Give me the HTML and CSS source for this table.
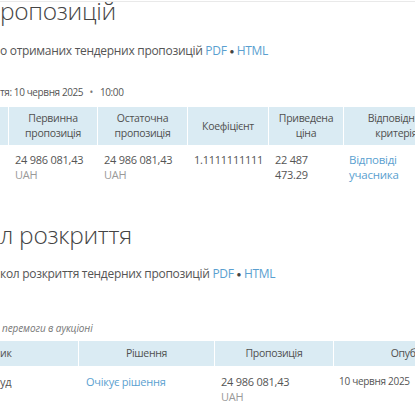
FILE: index.html
```html
<!DOCTYPE html>
<html lang="uk">
<head>
<meta charset="utf-8">
<link rel="stylesheet" href="styles.css">
</head>
<body>
<div class="page">
  <div class="topline"></div>
  <h2 class="title t1">ропозицій</h2>
  <p class="doc">о отриманих тендерних пропозицій <a class="link">PDF</a> <span class="dot">●</span> <a class="link">HTML</a></p>
  <p class="meta">тя: 10 червня 2025 <span class="bullet">•</span> 10:00</p>

  <table class="grid g1">
    <colgroup>
      <col class="c8"><col class="c89"><col class="c90"><col class="c81"><col class="c75"><col class="c113">
    </colgroup>
    <thead>
      <tr>
        <th></th>
        <th>Первинна<br>пропозиція</th>
        <th>Остаточна<br>пропозиція</th>
        <th>Коефіцієнт</th>
        <th>Приведена<br>ціна</th>
        <th>Відповідність<br>критеріям</th>
      </tr>
    </thead>
    <tbody>
      <tr>
        <td></td>
        <td>24 986 081,43<span class="cur">UAH</span></td>
        <td>24 986 081,43<span class="cur">UAH</span></td>
        <td>1.1111111111</td>
        <td>22 487<br>473.29</td>
        <td class="ans"><a class="link">Відповіді<br>учасника</a></td>
      </tr>
    </tbody>
  </table>

  <h2 class="title t2">л розкриття</h2>
  <p class="doc d2">кол розкриття тендерних пропозицій <a class="link">PDF</a> <span class="dot">●</span> <a class="link">HTML</a></p>

  <p class="note">перемоги в аукціоні</p>
  <table class="grid g2">
    <colgroup>
      <col class="c78"><col class="c136"><col class="c119"><col class="c187">
    </colgroup>
    <thead>
      <tr>
        <th class="left">ик</th>
        <th>Рішення</th>
        <th>Пропозиція</th>
        <th>Опублікування</th>
      </tr>
    </thead>
    <tbody>
      <tr>
        <td class="flush">уд</td>
        <td class="pad8"><a class="link">Очікує рішення</a></td>
        <td>24 986 081,43<span class="cur">UAH</span></td>
        <td class="small">10 червня 2025</td>
      </tr>
    </tbody>
  </table>
</div>
</body>
</html>
```

FILE: styles.css
```css
html, body {
  margin: 0;
  padding: 0;
  background: #fff;
  overflow: hidden;
}
body {
  width: 415px;
  height: 415px;
  font-family: "Open Sans", "Noto Sans", sans-serif;
  color: #555;
}
.page {
  width: 415px;
}
.topline {
  height: 1px;
  margin-top: 1px;
  background: #e9e9e9;
}
.title {
  margin: 0;
  font-weight: 300;
  font-size: 24.5px;
  letter-spacing: -0.3px;
  line-height: 30px;
  color: #444;
  white-space: nowrap;
}
.t1 {
  margin-top: -6px;
}
.doc {
  margin: 0;
  font-size: 12px;
  letter-spacing: -0.3px;
  line-height: 18px;
  white-space: nowrap;
}
.t1 + .doc {
  margin-top: 16px;
}
.link {
  color: #5a9fd0;
  text-decoration: none;
}
.dot {
  font-size: 8px;
  color: #444;
  vertical-align: 1px;
}
.meta {
  margin: 24px 0 0;
  font-size: 10px;
  letter-spacing: -0.4px;
  line-height: 16px;
  white-space: nowrap;
}
.bullet {
  margin: 0 5px 0 4px;
  color: #777;
}
.c8 { width: 8px; }
.c89 { width: 89px; }
.c90 { width: 90px; }
.c81 { width: 81px; }
.c75 { width: 75px; }
.c113 { width: 113px; }
.c78 { width: 78px; }
.c136 { width: 136px; }
.c119 { width: 119px; }
.c187 { width: 187px; }
.grid {
  border-collapse: separate;
  border-spacing: 0;
  table-layout: fixed;
}
.g1 {
  margin-top: 7px;
  width: 456px;
}
.grid th {
  background: #daebf3;
  font-size: 10.5px;
  letter-spacing: -0.3px;
  font-weight: 400;
  line-height: 15px;
  color: #505050;
  text-align: center;
  padding: 4px 4px;
  border-left: 1px solid #fff;
  white-space: nowrap;
  overflow: hidden;
}
.grid th:first-child {
  border-left: 0;
}
.grid td {
  vertical-align: top;
  font-size: 11px;
  letter-spacing: -0.25px;
  line-height: 15px;
  padding: 7px 4px 8px 7px;
  white-space: nowrap;
}
.g1 td.ans {
  padding-left: 6px;
  font-size: 11.5px;
}
.cur {
  display: block;
  color: #999;
}
.g1 th {
  height: 30px;
}
.t2 {
  margin-top: 30px;
}
.d2 {
  margin-top: 15px;
}
.note {
  margin: 37px 0 0 2px;
  font-size: 10px;
  letter-spacing: -0.1px;
  line-height: 16px;
  font-style: italic;
  color: #777;
}
.g2 {
  margin-top: 5px;
  width: 520px;
}
.g2 th {
  height: 17px;
  padding-top: 4px;
  padding-bottom: 4px;
}
.g2 th.left {
  text-align: left;
  padding-left: 0;
}
.g2 td {
  padding-top: 8px;
}
.g2 td.flush {
  padding-left: 0;
}
.g2 td.pad8 {
  padding-left: 8px;
  font-size: 11px;
}
.g2 td.small {
  font-size: 10px;
  letter-spacing: -0.3px;
  padding-left: 6px;
  padding-top: 8px;
}
```
